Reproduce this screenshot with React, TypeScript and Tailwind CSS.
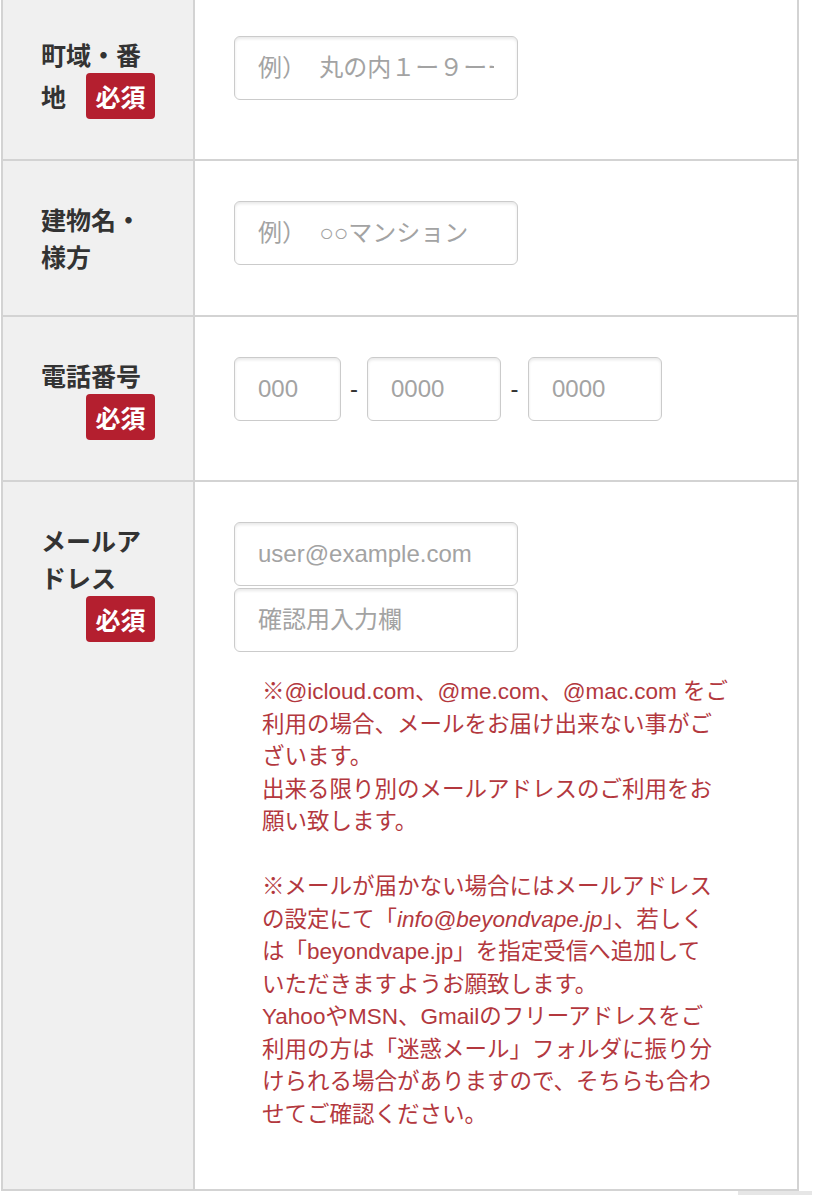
import React from 'react';

const cjk = { fontFamily: '"Noto Sans CJK JP", "Noto Sans", sans-serif' };
const mixed = { fontFamily: '"Liberation Sans", "Noto Sans CJK JP", sans-serif' };

function Badge() {
  return (
    <span className="flex h-[46px] w-[69px] items-center justify-center rounded-[4px] bg-[#b41f2f] text-[25px] font-bold leading-none text-white">
      必須
    </span>
  );
}

function Field({ placeholder, width = 'w-[284px]' }: { placeholder: string; width?: string }) {
  return (
    <input
      type="text"
      placeholder={placeholder}
      className={`${width} h-[64px] rounded-[6px] border border-[#cbcbcb] bg-white px-[23px] text-[24px] text-[#333] shadow-[inset_0_2px_3px_rgba(0,0,0,0.09)] outline-none placeholder:text-[#a3a3a3]`}
      style={mixed}
    />
  );
}

function Row({ label, children, last }: { label: React.ReactNode; children: React.ReactNode; last?: boolean }) {
  return (
    <div className={`flex ${last ? '' : 'border-b-2 border-[#d3d3d3]'}`}>
      <div className="w-[192px] shrink-0 border-r-2 border-[#d3d3d3] bg-[#f0f0f0] px-[38px] py-[40px] text-[25px] font-bold leading-[37px] text-[#333]">
        {label}
      </div>
      <div className="flex-1 py-[40px] pl-[39px] pr-[40px]">{children}</div>
    </div>
  );
}

export default function App() {
  return (
    <div className="min-h-[1195px] w-[828px] overflow-hidden bg-white" style={cjk}>
      <div className="-mt-[4px] ml-[1px] w-[798px] border-x-2 border-b-2 border-[#d3d3d3]">
        <Row
          label={
            <>
              <div>町域・番</div>
              <div className="flex items-center justify-between">
                <span>地</span>
                <Badge />
              </div>
            </>
          }
        >
          <Field placeholder="例）  丸の内１ー９ーー" />
        </Row>

        <Row
          label={
            <>
              <div>建物名・</div>
              <div>様方</div>
            </>
          }
        >
          <Field placeholder="例）  ○○マンション" />
        </Row>

        <Row
          label={
            <>
              <div>電話番号</div>
              <div className="flex justify-end">
                <Badge />
              </div>
            </>
          }
        >
          <div className="flex items-center">
            <Field placeholder="000" width="w-[107px]" />
            <span className="w-[26px] text-center text-[24px] text-[#333]" style={mixed}>-</span>
            <Field placeholder="0000" width="w-[134px]" />
            <span className="w-[27px] text-center text-[24px] text-[#333]" style={mixed}>-</span>
            <Field placeholder="0000" width="w-[134px]" />
          </div>
        </Row>

        <Row
          last
          label={
            <>
              <div>メールア</div>
              <div>ドレス</div>
              <div className="flex justify-end">
                <Badge />
              </div>
            </>
          }
        >
          <div className="flex flex-col gap-[2px]">
            <Field placeholder="user@example.com" />
            <Field placeholder="確認用入力欄" />
          </div>
          <div
            className="mb-[18px] ml-[28px] mt-[24px] whitespace-nowrap text-[22.5px] leading-[32.5px] text-[#b3383e]"
            style={mixed}
          >
            <p>
              ※@icloud.com、@me.com、@mac.com をご<br />
              利用の場合、メールをお届け出来ない事がご<br />
              ざいます。<br />
              出来る限り別のメールアドレスのご利用をお<br />
              願い致します。
            </p>
            <p className="mt-[32.5px]">
              ※メールが届かない場合にはメールアドレス<br />
              の設定にて「<i>info@beyondvape.jp</i>」、若しく<br />
              は「beyondvape.jp」を指定受信へ追加して<br />
              いただきますようお願致します。<br />
              YahooやMSN、Gmailのフリーアドレスをご<br />
              利用の方は「迷惑メール」フォルダに振り分<br />
              けられる場合がありますので、そちらも合わ<br />
              せてご確認ください。
            </p>
          </div>
        </Row>
      </div>
      <div className="flex justify-end pr-[16px]">
        <div className="h-[10px] w-[74px] bg-[#e6e6e6]" />
      </div>
    </div>
  );
}
